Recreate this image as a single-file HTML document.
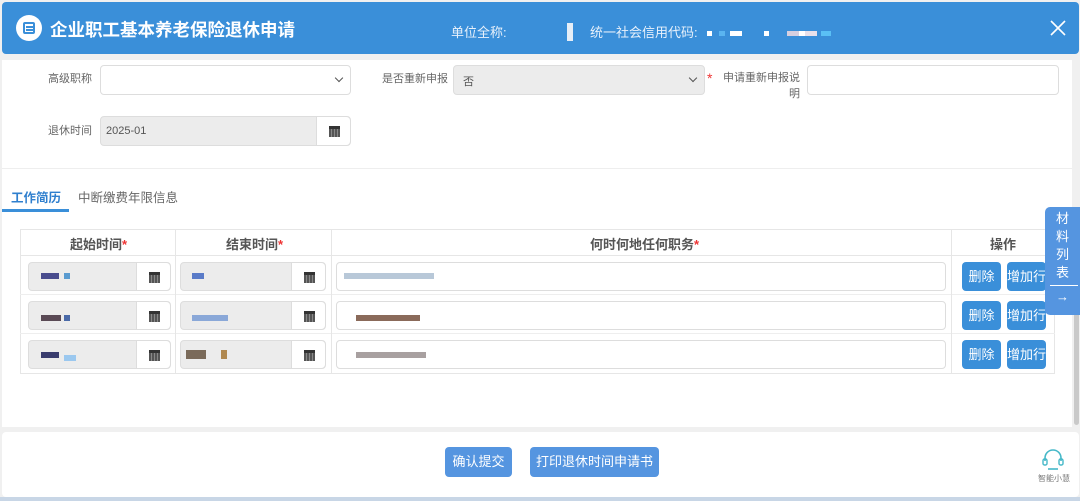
<!DOCTYPE html>
<html><head><meta charset="utf-8"><style>
*{box-sizing:border-box;margin:0;padding:0}
body{width:1080px;height:501px;overflow:hidden;background:#f0f0f0;font-family:"Liberation Sans","Noto Sans CJK SC",sans-serif;position:relative;font-size:12px;color:#555}
.a{position:absolute}
.hdr{left:2px;top:2px;width:1077px;height:52px;background:#3a8fd9;border-radius:4px;color:#fff}
.panel{left:2px;top:60px;width:1070px;height:367px;background:#fff}
.inp{position:absolute;border:1px solid #ddd;border-radius:4px;background:#fff;height:30px}
.gray{background:#ececec}
.cal{position:absolute;right:0;top:0;bottom:0;width:34px;background:#fff;border-left:1px solid #ddd;border-radius:0 4px 4px 0}
.cal i{position:absolute;left:12px;top:9px;width:11px;height:11px;border-top:3px solid #333;background:repeating-linear-gradient(90deg,#555 0 2px,#888 2px 3px)}
.chev{position:absolute;right:8px;top:9px;width:6px;height:6px;border-right:1.3px solid #555;border-bottom:1.3px solid #555;transform:rotate(45deg)}
.lbl{position:absolute;font-size:11px;color:#666}
.btn{position:absolute;background:#3a8fd9;color:#fff;border-radius:4px;font-size:13px;text-align:center;line-height:29px;height:29px}
.blur{position:absolute;height:6px}
</style></head><body>
<div class="a hdr">
 <div class="a" style="left:14px;top:13px;width:26px;height:26px;border-radius:50%;background:#fff"><div class="a" style="left:7px;top:7px;width:12px;height:12px;border:2px solid #3a8fd9;border-radius:2px"></div><div class="a" style="left:10px;top:11px;width:7px;height:1.5px;background:#3a8fd9;box-shadow:0 3px 0 #3a8fd9"></div></div>
 <div class="a" style="left:48px;top:15px;font-size:17.5px;font-weight:bold">企业职工基本养老保险退休申请</div>
 <div class="a" style="left:449px;top:20px;font-size:13px;color:#e8f1fb">单位全称:</div>
 <div class="a" style="left:565px;top:21px;width:6px;height:18px;background:#e6eef7"></div>
 <div class="a" style="left:588px;top:20px;font-size:13px;color:#e8f1fb">统一社会信用代码:</div>
 <div class="a" style="left:705px;top:29px;width:5px;height:5px;background:#fff"></div>
 <div class="a" style="left:717px;top:29px;width:6px;height:5px;background:#5ab4f0"></div>
 <div class="a" style="left:728px;top:29px;width:12px;height:5px;background:#fff"></div>
 <div class="a" style="left:762px;top:29px;width:5px;height:5px;background:#fff"></div>
 <div class="a" style="left:785px;top:29px;width:30px;height:5px;background:linear-gradient(90deg,#d6cfe0 40%,#fff 40%,#fff 60%,#e8e0ea 60%)"></div>
 <div class="a" style="left:819px;top:29px;width:10px;height:5px;background:#5ac0f5"></div>
 <svg class="a" style="left:1048px;top:18px" width="16" height="16"><path d="M1 1L15 15M15 1L1 15" stroke="#fff" stroke-width="1.6"/></svg>
</div>
<div class="a panel"></div>
<div class="lbl" style="left:48px;top:70px">高级职称</div>
<div class="inp" style="left:100px;top:65px;width:251px"><span class="chev"></span></div>
<div class="lbl" style="left:382px;top:70px">是否重新申报</div>
<div class="inp gray" style="left:453px;top:65px;width:252px"><span style="position:absolute;left:9px;top:7px;font-size:11px">否</span><span class="chev"></span></div>
<div class="a" style="left:707px;top:70px;color:#e33;font-size:14px">*</div>
<div class="lbl" style="left:722px;top:70px;width:78px;text-align:right;line-height:16px">申请重新申报说<br>明</div>
<div class="inp" style="left:807px;top:65px;width:252px"></div>
<div class="lbl" style="left:48px;top:122px">退休时间</div>
<div class="inp gray" style="left:100px;top:116px;width:251px"><span style="position:absolute;left:5px;top:8px;font-size:11px">2025-01</span><div class="cal"><i></i></div></div>
<div class="a" style="left:2px;top:168px;width:1070px;height:1px;background:#eee"></div>
<div class="a" style="left:11px;top:187px;font-size:12.5px;color:#2f7fce;font-weight:bold">工作简历</div>
<div class="a" style="left:78px;top:187px;font-size:12.5px;color:#666">中断缴费年限信息</div>
<div class="a" style="left:2px;top:209px;width:67px;height:3px;background:#3a8fd9"></div>
<div class="a" style="left:20px;top:229px;width:1035px;height:145px;border:1px solid #e6e6e6"></div>
<div class="a" style="left:20px;top:255px;width:1035px;height:1px;background:#e6e6e6"></div>
<div class="a" style="left:20px;top:294px;width:1035px;height:1px;background:#eee"></div>
<div class="a" style="left:20px;top:333px;width:1035px;height:1px;background:#eee"></div>
<div class="a" style="left:175px;top:229px;width:1px;height:145px;background:#e6e6e6"></div>
<div class="a" style="left:331px;top:229px;width:1px;height:145px;background:#e6e6e6"></div>
<div class="a" style="left:951px;top:229px;width:1px;height:145px;background:#e6e6e6"></div>
<div class="a" style="left:70px;top:234px;font-size:13px;font-weight:bold;color:#555">起始时间<span style="color:#e33">*</span></div>
<div class="a" style="left:226px;top:234px;font-size:13px;font-weight:bold;color:#555">结束时间<span style="color:#e33">*</span></div>
<div class="a" style="left:590px;top:234px;font-size:13px;font-weight:bold;color:#555">何时何地任何职务<span style="color:#e33">*</span></div>
<div class="a" style="left:990px;top:234px;font-size:13px;font-weight:bold;color:#555">操作</div>

<div class="inp gray" style="left:28px;top:262px;width:143px;height:29px"><div class="cal"><i></i></div></div>
<div class="inp gray" style="left:180px;top:262px;width:146px;height:29px"><div class="cal"><i></i></div></div>
<div class="inp" style="left:336px;top:262px;width:610px;height:29px"></div>
<div class="btn" style="left:962px;top:262px;width:39px">删除</div>
<div class="btn" style="left:1007px;top:262px;width:39px">增加行</div>
<div class="inp gray" style="left:28px;top:301px;width:143px;height:29px"><div class="cal"><i></i></div></div>
<div class="inp gray" style="left:180px;top:301px;width:146px;height:29px"><div class="cal"><i></i></div></div>
<div class="inp" style="left:336px;top:301px;width:610px;height:29px"></div>
<div class="btn" style="left:962px;top:301px;width:39px">删除</div>
<div class="btn" style="left:1007px;top:301px;width:39px">增加行</div>
<div class="inp gray" style="left:28px;top:340px;width:143px;height:29px"><div class="cal"><i></i></div></div>
<div class="inp gray" style="left:180px;top:340px;width:146px;height:29px"><div class="cal"><i></i></div></div>
<div class="inp" style="left:336px;top:340px;width:610px;height:29px"></div>
<div class="btn" style="left:962px;top:340px;width:39px">删除</div>
<div class="btn" style="left:1007px;top:340px;width:39px">增加行</div>

<div class="blur" style="left:41px;top:273px;width:18px;background:#4a4d8e"></div><div class="blur" style="left:64px;top:273px;width:6px;background:#5a9bd0"></div>
<div class="blur" style="left:41px;top:315px;width:20px;background:#5a4a55"></div><div class="blur" style="left:64px;top:315px;width:6px;background:#4a6aa8"></div>
<div class="blur" style="left:41px;top:352px;width:18px;background:#3a3d6e"></div><div class="blur" style="left:64px;top:355px;width:12px;background:#9bc8ef"></div>
<div class="blur" style="left:192px;top:273px;width:12px;background:#5a7bc8"></div>
<div class="blur" style="left:192px;top:315px;width:36px;background:#8aa8d8"></div>
<div class="blur" style="left:186px;top:350px;width:20px;height:9px;background:#7a6a5a"></div><div class="blur" style="left:221px;top:350px;width:6px;height:9px;background:#b08850"></div>
<div class="blur" style="left:344px;top:273px;width:90px;background:#b8c8d8"></div>
<div class="blur" style="left:356px;top:315px;width:64px;background:#8a6a5a"></div>
<div class="blur" style="left:356px;top:352px;width:70px;background:#a8a0a0"></div>

<div class="a" style="left:1074px;top:300px;width:5px;height:125px;background:#c9c9c9;border-radius:3px"></div>
<div class="a" style="left:1045px;top:207px;width:35px;height:108px;background:#5595e0;border-radius:5px 0 0 5px;color:#fff;font-size:13px;text-align:center;line-height:18px;padding-top:3px">材<br>料<br>列<br>表
<div style="margin:3px 2px 0 5px;height:1px;background:#fff"></div><div style="font-size:13px;line-height:22px">→</div></div>

<div class="a" style="left:2px;top:432px;width:1077px;height:65px;background:#fff;border-radius:4px"></div>
<div class="a" style="left:0;top:497px;width:1080px;height:4px;background:#c8d6e6"></div>
<div class="btn" style="left:445px;top:447px;width:67px;height:30px;line-height:30px;background:#5595e0">确认提交</div>
<div class="btn" style="left:530px;top:447px;width:129px;height:30px;line-height:30px;background:#5595e0">打印退休时间申请书</div>
<svg class="a" style="left:1041px;top:447px" width="24" height="24"><path d="M4 14V11a8 8 0 0 1 16 0v3" fill="none" stroke="#45b8c8" stroke-width="1.6"/><rect x="2" y="12" width="4" height="6" rx="1.5" fill="none" stroke="#45b8c8" stroke-width="1.4"/><rect x="18" y="12" width="4" height="6" rx="1.5" fill="none" stroke="#45b8c8" stroke-width="1.4"/><path d="M7 22h10" stroke="#45b8c8" stroke-width="1.6"/></svg>
<div class="a" style="left:1038px;top:473px;font-size:8px;color:#777">智能小慧</div>
</body></html>
